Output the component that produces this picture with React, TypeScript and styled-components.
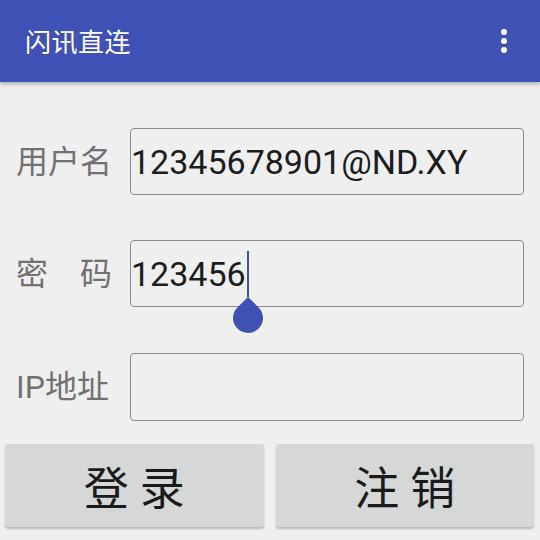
import React from "react";
import styled, { createGlobalStyle } from "styled-components";

const GlobalStyle = createGlobalStyle`
  html, body {
    margin: 0;
    padding: 0;
    background: #efefef;
  }
  body {
    width: 540px;
    height: 540px;
    overflow: hidden;
    font-family: Roboto, "Noto Sans CJK SC", sans-serif;
  }
`;

const Screen = styled.div`
  width: 540px;
  height: 540px;
  background: #efefef;
  display: flex;
  flex-direction: column;
`;

const AppBar = styled.header`
  height: 82px;
  flex: none;
  background: #3f51b5;
  display: flex;
  align-items: center;
  justify-content: space-between;
  padding: 0 33px 0 25px;
  box-shadow: 0 2px 4px rgba(0, 0, 0, 0.28);
  position: relative;
  z-index: 1;
`;

const Title = styled.h1`
  margin: 0;
  color: #ffffff;
  font-family: "Noto Sans CJK SC", sans-serif;
  font-weight: 400;
  font-size: 26px;
  line-height: 1;
  letter-spacing: 0.5px;
`;

const MenuButton = styled.div`
  display: flex;
  flex-direction: column;
  gap: 3px;
`;

const Dot = styled.span`
  width: 6px;
  height: 6px;
  border-radius: 50%;
  background: #ffffff;
`;

const Form = styled.main`
  display: flex;
  flex-direction: column;
  gap: 45px;
  padding: 46px 16px 0 16px;
`;

const Row = styled.div<{ $extraGap?: boolean }>`
  display: grid;
  grid-template-columns: 114px 1fr;
  align-items: center;
  margin-top: ${(p) => (p.$extraGap ? 1 : 0)}px;
`;

const Label = styled.label`
  font-family: Roboto, "Noto Sans CJK SC", sans-serif;
  font-size: 32px;
  color: #717171;
  white-space: pre;
  line-height: 1;
`;

const FieldBox = styled.div<{ $tall?: boolean }>`
  height: ${(p) => (p.$tall ? 68 : 67)}px;
  box-sizing: border-box;
  border: 1px solid #8c8c8c;
  border-radius: 4px;
  display: flex;
  align-items: center;
  padding: 0;
  font-family: Roboto, sans-serif;
  font-size: 34px;
  color: #1c1c1c;
  white-space: nowrap;
`;

const Caret = styled.span`
  position: relative;
  display: inline-block;
  width: 2px;
  height: 46px;
  margin-left: 1px;
  background: #3f51b5;
`;

const Handle = styled.svg`
  position: absolute;
  top: 100%;
  left: 50%;
  transform: translateX(-50%);
  width: 30px;
  height: 36px;
  display: block;
`;

const ButtonRow = styled.div`
  display: grid;
  grid-template-columns: 1fr 1fr;
  gap: 12px;
  padding: 23px 6px 0 5px;
`;

const Button = styled.button`
  height: 83px;
  border: none;
  border-radius: 3px;
  background: #d6d7d7;
  box-shadow: 0 2px 2px rgba(0, 0, 0, 0.22);
  font-family: Roboto, "Noto Sans CJK SC", sans-serif;
  font-size: 45px;
  color: #1a1a1a;
  padding: 0;
  display: flex;
  align-items: center;
  justify-content: center;
  white-space: pre;
`;

export default function App() {
  return (
    <>
      <GlobalStyle />
      <Screen>
        <AppBar>
          <Title>闪讯直连</Title>
          <MenuButton>
            <Dot />
            <Dot />
            <Dot />
          </MenuButton>
        </AppBar>
        <Form>
          <Row>
            <Label>用户名</Label>
            <FieldBox>12345678901@ND.XY</FieldBox>
          </Row>
          <Row>
            <Label>{"密\u3000码"}</Label>
            <FieldBox>
              123456
              <Caret>
                <Handle viewBox="0 0 30 36">
                  <path
                    d="M15 0 L4.39 10.39 A15 15 0 1 0 25.61 10.39 Z"
                    fill="#3f51b5"
                  />
                </Handle>
              </Caret>
            </FieldBox>
          </Row>
          <Row $extraGap>
            <Label>IP地址</Label>
            <FieldBox $tall />
          </Row>
        </Form>
        <ButtonRow>
          <Button>登 录</Button>
          <Button>注 销</Button>
        </ButtonRow>
      </Screen>
    </>
  );
}
